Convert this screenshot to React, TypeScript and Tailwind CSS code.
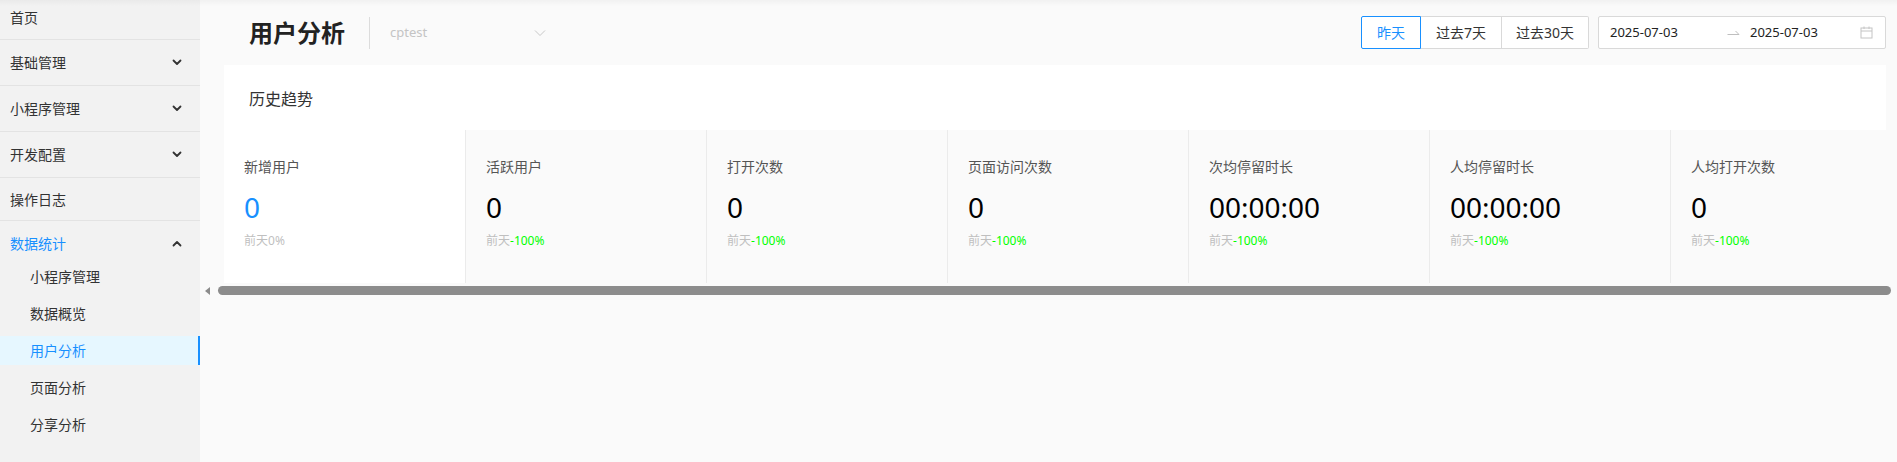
import React from "react";

const font = "font-['Noto_Sans','Noto_Sans_CJK_SC',sans-serif]";

function ChevronDown() {
  return (
    <svg width="10" height="7" viewBox="0 0 10 7" className="text-[#333]">
      <path d="M1.5 1.5 L5 5 L8.5 1.5" fill="none" stroke="currentColor" strokeWidth="1.8" strokeLinecap="round" strokeLinejoin="round" />
    </svg>
  );
}
function ChevronUp() {
  return (
    <svg width="10" height="7" viewBox="0 0 10 7" className="text-[#333]">
      <path d="M1.5 5.5 L5 2 L8.5 5.5" fill="none" stroke="currentColor" strokeWidth="1.8" strokeLinecap="round" strokeLinejoin="round" />
    </svg>
  );
}

const topItems: { label: string; chevron?: boolean; h: string }[] = [
  { label: "基础管理", chevron: true, h: "h-[46px]" },
  { label: "小程序管理", chevron: true, h: "h-[46px]" },
  { label: "开发配置", chevron: true, h: "h-[46px]" },
  { label: "操作日志", h: "h-[43px]" },
];

const subItems = ["小程序管理", "数据概览", "用户分析", "页面分析", "分享分析"];

const stats = [
  { label: "新增用户", value: "0", first: true },
  { label: "活跃用户", value: "0" },
  { label: "打开次数", value: "0" },
  { label: "页面访问次数", value: "0" },
  { label: "次均停留时长", value: "00:00:00" },
  { label: "人均停留时长", value: "00:00:00" },
  { label: "人均打开次数", value: "0" },
];

export default function App() {
  return (
    <div className={`relative flex w-[1897px] h-[462px] overflow-hidden bg-[#fafafa] ${font}`}>
      {/* Sidebar */}
      <aside className="w-[200px] shrink-0 h-full bg-[#f2f2f2] text-[14px] text-[#333]">
        <div className="h-[40px] flex items-center pl-[10px] pb-[4px] border-b border-[#e3e3e3]">首页</div>
        {topItems.map((it) => (
          <div key={it.label} className={`${it.h} flex items-center justify-between pl-[10px] pr-[18px] border-b border-[#e3e3e3]`}>
            <span>{it.label}</span>
            {it.chevron && <ChevronDown />}
          </div>
        ))}
        <div className="h-[41px] flex items-center justify-between pl-[10px] pr-[18px] pt-[4px] text-[#1890ff]">
          <span>数据统计</span>
          <ChevronUp />
        </div>
        <div className="flex flex-col gap-[8px]">
          {subItems.map((s) => {
            const active = s === "用户分析";
            return (
              <div
                key={s}
                className={`h-[29px] flex items-center pl-[30px] ${active ? "bg-[#e6f7ff] text-[#1890ff] border-r-2 border-[#1890ff]" : ""}`}
              >
                {s}
              </div>
            );
          })}
        </div>
      </aside>

      {/* Main */}
      <main className="flex-1 flex flex-col min-w-0">
        <header className="h-[65px] shrink-0 flex items-center justify-between pl-[49px] pr-[11px]">
          <div className="flex items-center">
            <h1 className="text-[24px] font-bold text-[#222] leading-8">用户分析</h1>
            <div className="w-px h-[32px] bg-[#dcdcdc] ml-[24px]" />
            <div className="w-[175px] ml-[10px] flex items-center justify-between pl-[10px] pr-[9px]">
              <span className="text-[13px] text-[#c4c4c4]">cptest</span>
              <svg width="12" height="8" viewBox="0 0 12 8">
                <path d="M1 1.5 L6 6.5 L11 1.5" fill="none" stroke="#c8c8c8" strokeWidth="1" />
              </svg>
            </div>
          </div>
          <div className="flex items-center">
            <div className="flex h-[33px] text-[14px]">
              <button className="w-[60px] h-full border border-[#1890ff] text-[#1890ff] bg-white rounded-l-[2px]">昨天</button>
              <button className="w-[81px] h-full border-y border-r border-[#d9d9d9] text-[#333] bg-white">过去7天</button>
              <button className="w-[87px] h-full border-y border-r border-[#d9d9d9] text-[#333] bg-white rounded-r-[2px]">过去30天</button>
            </div>
            <div className="ml-[9px] w-[288px] h-[33px] border border-[#d9d9d9] bg-white rounded-[2px] flex items-center pl-[11px] pr-[12px] text-[13px] text-[#222]">
              <span className="w-[117px]">2025-07-03</span>
              <svg width="13" height="8" viewBox="0 0 13 8">
                <path d="M0.5 5.5 H12 M8.5 2 L12 5.5" fill="none" stroke="#bfbfbf" strokeWidth="1" />
              </svg>
              <span className="ml-[10px] flex-1">2025-07-03</span>
              <svg width="13" height="13" viewBox="0 0 13 13">
                <rect x="1" y="2" width="11" height="10" fill="none" stroke="#c4c4c4" strokeWidth="1" />
                <path d="M1 5 H12 M4 0.5 V3 M9 0.5 V3" fill="none" stroke="#c4c4c4" strokeWidth="1" />
              </svg>
            </div>
          </div>
        </header>

        <section className="ml-[24px] mr-[11px] bg-white overflow-hidden">
          <div className="h-[65px] pt-[22px] pl-[25px] text-[16px] leading-6 text-[#333]">历史趋势</div>
          <div className="flex h-[153px]">
            {stats.map((s, i) => (
              <div
                key={s.label}
                className={`w-[241px] shrink-0 pl-[20px] pt-[27px] ${s.first ? "bg-white" : "bg-[#fafafa]"} ${i > 0 ? "border-l border-[#ebebeb]" : ""}`}
              >
                <div className="text-[14px] leading-5 text-[#555]">{s.label}</div>
                <div className={`mt-[12px] text-[28px] leading-9 ${s.first ? "text-[#1890ff]" : "text-black"}`}>{s.value}</div>
                <div className="mt-[8px] text-[12px] leading-4 text-[#bfbfbf]">
                  前天{s.first ? "0%" : <span className="text-[#00ff00]">-100%</span>}
                </div>
              </div>
            ))}
          </div>
        </section>

        <div className="mt-[3px] flex items-center pl-[5px] pr-[6px] h-[9px]">
          <svg width="5" height="8" viewBox="0 0 5 8">
            <path d="M5 0 L0 4 L5 8 Z" fill="#8c8c8c" />
          </svg>
          <div className="ml-[8px] flex-1 h-[9px] rounded-full bg-[#8c8c8c]" />
        </div>
      </main>

      <div className="pointer-events-none absolute top-0 inset-x-0 h-[6px] bg-gradient-to-b from-black/[0.035] to-transparent" />
    </div>
  );
}
